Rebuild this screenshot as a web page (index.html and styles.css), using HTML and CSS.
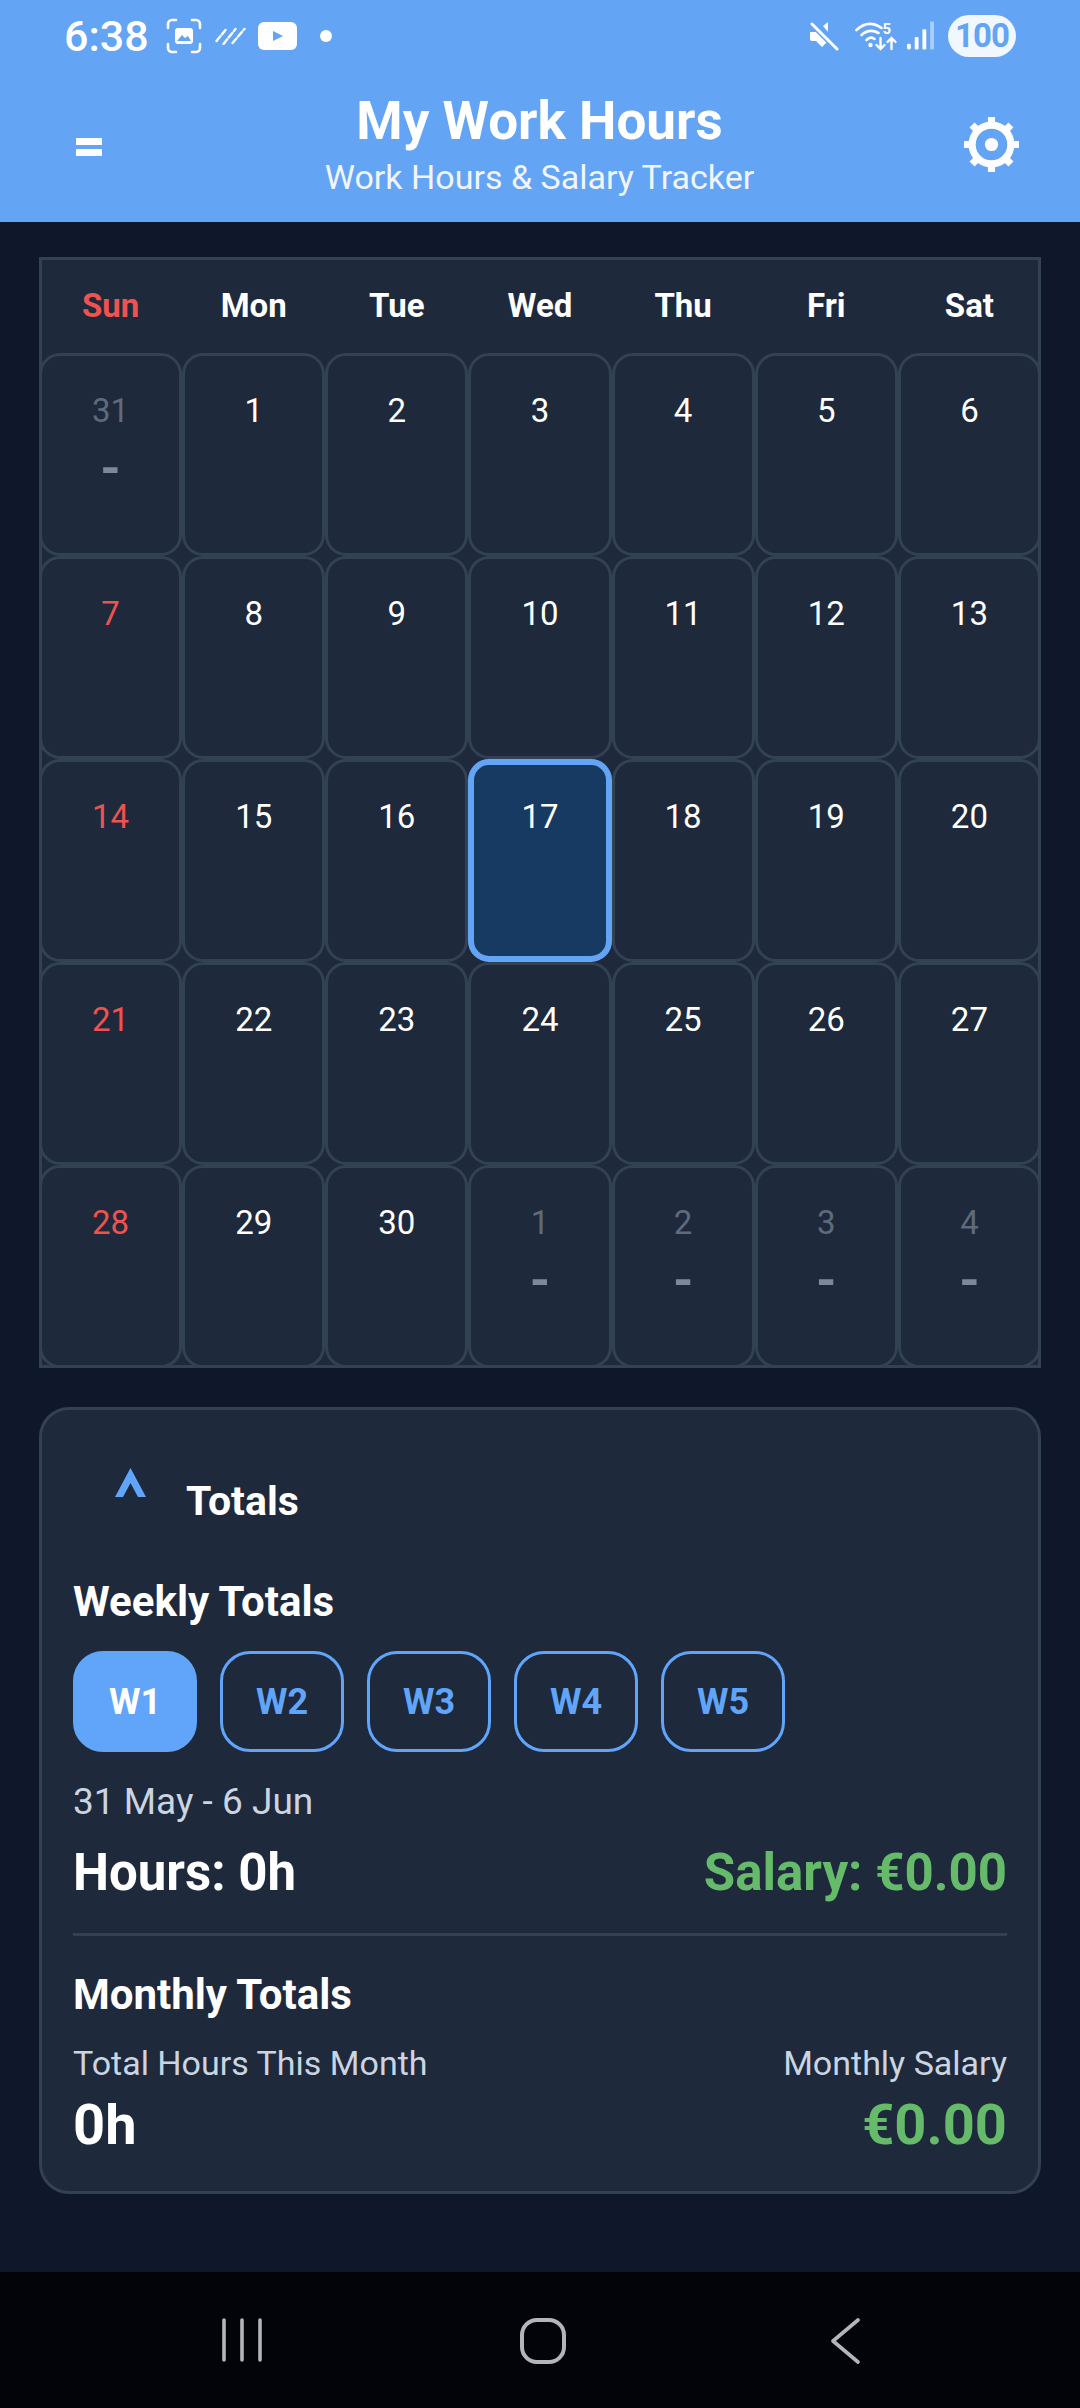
FILE: index.html
```html
<!DOCTYPE html>
<html lang="en">

<head>
    <meta charset="UTF-8">
    <meta name="viewport" content="width=device-width, initial-scale=1.0">
    <title>My Work Hours</title>
    <link rel="stylesheet" href="styles.css">
</head>

<body>
    <header class="top">
        <div class="status-bar">
            <div class="status-left">
                <span class="time">6:38</span>
                <svg class="ic-shot" viewBox="0 0 36 36" fill="none" stroke="#fff" stroke-width="2.6" stroke-linecap="round">
                    <path d="M2 10V6a4 4 0 0 1 4-4h4M26 2h4a4 4 0 0 1 4 4v4M34 26v4a4 4 0 0 1-4 4h-4M10 34H6a4 4 0 0 1-4-4v-4" />
                    <rect x="9" y="10" width="18" height="16" rx="3" fill="#fff" stroke="none" />
                    <path d="M11 23l5-6 3 3 3-2 3 5z" fill="#63a4f4" stroke="none" />
                </svg>
                <svg class="ic-dash" viewBox="0 0 30 18" fill="none" stroke="#fff" stroke-width="2.4" stroke-linecap="round" stroke-dasharray="6 2.5">
                    <path d="M1 14L10 3M8 17L20 2M17 16L29 2" />
                </svg>
                <svg class="ic-yt" viewBox="0 0 39 28">
                    <rect width="39" height="28" rx="6" fill="#fff" />
                    <path d="M15 9l10 5-10 5z" fill="#63a4f4" />
                </svg>
                <span class="dot"></span>
            </div>
            <div class="status-right">
                <svg class="ic-mute" viewBox="0 0 30 30">
                    <path d="M1 11h6l4-3 8 10v2L13 26l-6-6H3a2 2 0 0 1-2-2z" fill="#fff" />
                    <path d="M19 1v10l-5-6z" fill="#fff" />
                    <path d="M3 3l25 25" stroke="#63a4f4" stroke-width="6" />
                    <path d="M3 3l25 25" stroke="#fff" stroke-width="3" stroke-linecap="round" />
                </svg>
                <svg class="ic-wifi" viewBox="0 0 42 32" fill="none" stroke="#fff" stroke-width="2.6" stroke-linecap="round">
                    <path d="M1 10Q13-1 26 8M6 15Q14 8 23 13M11 20Q15 16 19 19" />
                    <circle cx="15" cy="25" r="2.2" fill="#fff" stroke="none" />
                    <path d="M25 18v11M21 25l4 4 4-4M36 29V18M32 22l4-4 4 4" stroke-width="2.4" />
                    <text x="27" y="14" class="wifi-5">5</text>
                </svg>
                <svg class="ic-signal" viewBox="0 0 28 30">
                    <rect x="0" y="23" width="4" height="6" rx="1.5" fill="#fff" />
                    <rect x="8" y="16" width="4" height="13" rx="1" fill="#fff" />
                    <rect x="16" y="8" width="4" height="21" rx="1" fill="#fff" />
                    <rect x="24" y="0" width="4" height="29" rx="1" fill="#a9cdfb" />
                </svg>
                <span class="battery">100</span>
            </div>
        </div>
        <div class="app-bar">
            <div class="menu-btn"><span></span><span></span></div>
            <div class="titles">
                <h1>My Work Hours</h1>
                <p>Work Hours &amp; Salary Tracker</p>
            </div>
            <svg class="ic-gear" viewBox="0 0 54 54" fill="none" stroke="#fff">
                <circle cx="27" cy="27" r="19" stroke-width="7" />
                <circle cx="27" cy="27" r="6.5" fill="#fff" stroke="none" />
                <path d="M27 0v8M27 46v8M0 27h8M46 27h8M7.9 7.9l5.7 5.7M40.4 40.4l5.7 5.7M7.9 46.1l5.7-5.7M40.4 13.6l5.7-5.7" stroke-width="7" />
            </svg>
        </div>
    </header>

    <main class="content">
        <section class="calendar">
            <div class="weekdays">
                <div class="sun">Sun</div>
                <div>Mon</div>
                <div>Tue</div>
                <div>Wed</div>
                <div>Thu</div>
                <div>Fri</div>
                <div>Sat</div>
            </div>
            <div class="days">
                <div class="day other">31<b>-</b></div>
                <div class="day">1</div>
                <div class="day">2</div>
                <div class="day">3</div>
                <div class="day">4</div>
                <div class="day">5</div>
                <div class="day">6</div>

                <div class="day sun">7</div>
                <div class="day">8</div>
                <div class="day">9</div>
                <div class="day">10</div>
                <div class="day">11</div>
                <div class="day">12</div>
                <div class="day">13</div>

                <div class="day sun">14</div>
                <div class="day">15</div>
                <div class="day">16</div>
                <div class="day today">17</div>
                <div class="day">18</div>
                <div class="day">19</div>
                <div class="day">20</div>

                <div class="day sun">21</div>
                <div class="day">22</div>
                <div class="day">23</div>
                <div class="day">24</div>
                <div class="day">25</div>
                <div class="day">26</div>
                <div class="day">27</div>

                <div class="day sun">28</div>
                <div class="day">29</div>
                <div class="day">30</div>
                <div class="day other">1<b>-</b></div>
                <div class="day other">2<b>-</b></div>
                <div class="day other">3<b>-</b></div>
                <div class="day other">4<b>-</b></div>
            </div>
        </section>

        <section class="totals">
            <div class="totals-head">
                <svg class="ic-chevron" viewBox="0 0 31 29">
                    <path d="M0 29L15.5 0 31 29h-8L15.5 15 8 29z" fill="#60a5fa" />
                </svg>
                <h2>Totals</h2>
            </div>
            <h3 class="weekly-title">Weekly Totals</h3>
            <div class="week-tabs">
                <button class="active">W1</button>
                <button>W2</button>
                <button>W3</button>
                <button>W4</button>
                <button>W5</button>
            </div>
            <div class="range">31 May - 6 Jun</div>
            <div class="row week-row">
                <span class="hours">Hours: 0h</span>
                <span class="hours green">Salary: €0.00</span>
            </div>
            <h3 class="monthly-title">Monthly Totals</h3>
            <div class="row label-row">
                <span>Total Hours This Month</span>
                <span>Monthly Salary</span>
            </div>
            <div class="row value-row">
                <span>0h</span>
                <span class="green">€0.00</span>
            </div>
        </section>
    </main>

    <nav class="nav-bar">
        <svg class="ic-recents" viewBox="0 0 40 44" fill="none" stroke="#b4b5b8" stroke-width="3.6" stroke-linecap="round">
            <path d="M2 2v40M20 2v40M38 2v40" />
        </svg>
        <svg class="ic-home" viewBox="0 0 46 46" fill="none" stroke="#b4b5b8" stroke-width="4">
            <rect x="2" y="2" width="42" height="42" rx="15" />
        </svg>
        <svg class="ic-back" viewBox="0 0 30 46" fill="none" stroke="#b4b5b8" stroke-width="3.6" stroke-linecap="round" stroke-linejoin="round">
            <path d="M28 2L3 23l25 21" />
        </svg>
    </nav>
</body>

</html>
```

FILE: styles.css
```css
* {
    box-sizing: border-box;
}

body {
    margin: 0;
    width: 1080px;
    height: 2408px;
    display: flex;
    flex-direction: column;
    overflow: hidden;
    font-family: Roboto, "Liberation Sans", sans-serif;
    background-color: #0f172a;
    color: #fff;
}

h1,
h2,
h3,
p {
    margin: 0;
}

/* header */
.top {
    height: 222px;
    background-color: #63a4f4;
}

.status-bar {
    height: 72px;
    display: flex;
    justify-content: space-between;
    align-items: center;
    padding: 0 64px 0 64px;
}

.status-left,
.status-right {
    display: flex;
    align-items: center;
}

.time {
    font-size: 43px;
    font-weight: 500;
    line-height: 72px;
    width: 102px;
}

.ic-shot {
    width: 36px;
    height: 36px;
    margin-right: 13px;
}

.ic-dash {
    width: 31px;
    height: 18px;
    margin-right: 12px;
}

.ic-yt {
    width: 39px;
    height: 28px;
    margin-right: 23px;
}

.dot {
    width: 12px;
    height: 12px;
    border-radius: 50%;
    background-color: #fff;
}

.ic-mute {
    width: 30px;
    height: 30px;
    margin-right: 16px;
}

.ic-wifi {
    width: 43px;
    height: 32px;
    margin-right: 9px;
}

.wifi-5 {
    font-size: 15px;
    font-weight: 700;
    fill: #fff;
    stroke: none;
}

.ic-signal {
    width: 27px;
    height: 30px;
    margin-right: 14px;
}

.battery {
    width: 68px;
    height: 42px;
    border-radius: 21px;
    background-color: #f1f7ff;
    color: #63a4f4;
    font-size: 33px;
    font-weight: 700;
    line-height: 42px;
    text-align: center;
    letter-spacing: -1px;
}

.app-bar {
    height: 150px;
    display: flex;
    justify-content: space-between;
    align-items: center;
    padding: 0 61px 0 76px;
}

.menu-btn {
    width: 39px;
    display: flex;
    flex-direction: column;
    gap: 4px;
}

.menu-btn span {
    width: 26px;
    height: 7px;
    background-color: #fff;
}

.titles {
    text-align: center;
}

.titles h1 {
    font-size: 53px;
    font-weight: 700;
    line-height: 60px;
}

.titles p {
    font-size: 34px;
    line-height: 52px;
    color: #f1f5f9;
}

.ic-gear {
    width: 55px;
    height: 55px;
    margin-bottom: 6px;
}

/* calendar */
.content {
    flex: 1;
    padding: 35px 39px 0;
}

.calendar {
    background-color: #1e293b;
    box-shadow: inset 0 0 0 3px #334155;
}

.weekdays {
    height: 96px;
    display: grid;
    grid-template-columns: repeat(7, 1fr);
    align-items: center;
    text-align: center;
    font-size: 33px;
    font-weight: 700;
}

.weekdays .sun {
    color: #ef5350;
}

.days {
    display: grid;
    grid-template-columns: repeat(7, 1fr);
    grid-auto-rows: 203px;
}

.day {
    display: flex;
    flex-direction: column;
    align-items: center;
    padding-top: 35px;
    border: 3px solid #334155;
    border-radius: 21px;
    background-color: #1e293b;
    font-size: 33px;
    line-height: 40px;
}

.day.sun {
    color: #ef5350;
}

.day.other {
    color: #5f6b7c;
}

.day b {
    font-size: 52px;
    line-height: 40px;
    margin-top: 18px;
    color: #7d8898;
}

.day.today {
    border: 6px solid #63a4f4;
    background-color: #173a63;
    padding-top: 32px;
}

/* totals card */
.totals {
    margin-top: 39px;
    height: 787px;
    padding: 0 31px;
    background-color: #1e293b;
    border: 3px solid #334155;
    border-radius: 30px;
}

.totals-head {
    height: 117px;
    padding: 58px 0 0 42px;
    display: flex;
}

.ic-chevron {
    width: 31px;
    height: 29px;
}

.totals-head h2 {
    font-size: 41px;
    font-weight: 700;
    line-height: 48px;
    margin-left: 40px;
    margin-top: 9px;
}

.totals h3 {
    font-size: 42px;
    font-weight: 700;
    line-height: 48px;
}

.weekly-title {
    margin-top: 51px;
}

.week-tabs {
    display: flex;
    gap: 23px;
    margin-top: 25px;
}

.week-tabs button {
    width: 124px;
    height: 101px;
    padding: 0;
    border: 3px solid #60a5fa;
    border-radius: 30px;
    background-color: transparent;
    color: #60a5fa;
    font-family: inherit;
    font-size: 36px;
    font-weight: 700;
}

.week-tabs button.active {
    background-color: #60a5fa;
    color: #fff;
}

.range {
    margin-top: 29px;
    font-size: 37px;
    line-height: 42px;
    color: #cbd5e1;
}

.row {
    display: flex;
    justify-content: space-between;
}

.week-row {
    padding-bottom: 30px;
    border-bottom: 3px solid #334155;
    margin-top: 20px;
}

.hours {
    font-size: 51px;
    font-weight: 700;
    line-height: 60px;
}

.green {
    color: #66bb6a;
}

.monthly-title {
    margin-top: 35px;
}

.label-row {
    margin-top: 22px;
    font-size: 34px;
    line-height: 44px;
    color: #cbd5e1;
}

.value-row {
    margin-top: 8px;
    font-size: 56px;
    font-weight: 700;
    line-height: 64px;
}

/* system navigation */
.nav-bar {
    height: 136px;
    background-color: #03040a;
    display: flex;
    align-items: flex-start;
    padding: 46px 0 0 222px;
}

.ic-recents {
    width: 40px;
    height: 44px;
}

.ic-home {
    width: 46px;
    height: 46px;
    margin-left: 258px;
}

.ic-back {
    width: 30px;
    height: 46px;
    margin-left: 264px;
}
```
